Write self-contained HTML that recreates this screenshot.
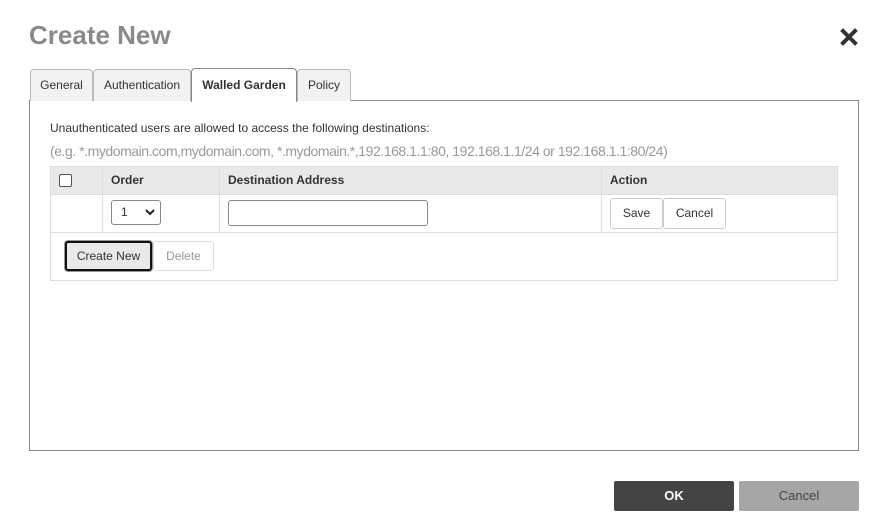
<!DOCTYPE html>
<html><head><style>
body{margin:0;width:890px;height:520px;background:#fff;font-family:"Liberation Sans",Arial,sans-serif;position:relative;overflow:hidden}
.a{position:absolute;box-sizing:border-box}
.tab{position:absolute;top:69px;height:32px;border:1px solid #bbb;border-bottom:none;border-radius:4px 4px 0 0;background:#f2f2f2;font-size:12px;color:#333;text-align:center;line-height:30px;box-sizing:border-box}
.btn{position:absolute;box-sizing:border-box;border:1px solid #ccc;border-radius:3px;background:#fff;font-size:12px;color:#333;text-align:center}
</style></head><body>
<div class="a" style="left:29px;top:20px;font-size:26px;font-weight:bold;color:#8a8a8a">Create New</div>
<svg class="a" style="left:840px;top:28px" width="18" height="18" viewBox="0 0 18 18"><path d="M3 3L15 15M15 3L3 15" stroke="#333" stroke-width="4" stroke-linecap="square"/></svg>
<div class="a" style="left:29px;top:100px;width:830px;height:351px;border:1px solid #888"></div>
<div class="tab" style="left:30px;width:63px">General</div>
<div class="tab" style="left:93px;width:98px">Authentication</div>
<div class="tab" style="left:191px;width:106px;top:68px;height:34px;background:#fff;border-color:#888;font-weight:bold;line-height:32px">Walled Garden</div>
<div class="tab" style="left:297px;width:54px">Policy</div>
<div class="a" style="left:50px;top:121px;font-size:12px;color:#333">Unauthenticated users are allowed to access the following destinations:</div>
<div class="a" style="left:50px;top:143px;font-size:14px;color:#999;letter-spacing:-0.45px;white-space:nowrap">(e.g. *.mydomain.com,mydomain.com, *.mydomain.*,192.168.1.1:80, 192.168.1.1/24 or 192.168.1.1:80/24)</div>
<div class="a" style="left:50px;top:166px;width:788px;height:115px;border:1px solid #ddd"></div>
<div class="a" style="left:51px;top:167px;width:786px;height:28px;background:#e9e9e9;border-bottom:1px solid #ddd"></div>
<div class="a" style="left:51px;top:232px;width:786px;height:1px;background:#ddd"></div>
<div class="a" style="left:102px;top:167px;width:1px;height:65px;background:#ddd"></div>
<div class="a" style="left:219px;top:167px;width:1px;height:65px;background:#ddd"></div>
<div class="a" style="left:601px;top:167px;width:1px;height:65px;background:#ddd"></div>
<div class="a" style="left:59px;top:174px;width:13px;height:13px;border:1px solid #555;border-radius:2px;background:#fff"></div>
<div class="a" style="left:111px;top:173px;font-size:12px;font-weight:bold;color:#333">Order</div>
<div class="a" style="left:228px;top:173px;font-size:12px;font-weight:bold;color:#333">Destination Address</div>
<div class="a" style="left:610px;top:173px;font-size:12px;font-weight:bold;color:#333">Action</div>
<div class="a" style="left:111px;top:200px;width:50px;height:25px;border:1px solid #888;border-radius:3px;font-size:12px;line-height:23px;padding-left:9px;color:#333">1</div>
<svg class="a" style="left:145px;top:209px" width="10" height="7" viewBox="0 0 10 7"><path d="M1 1L5 5L9 1" stroke="#222" stroke-width="2" fill="none"/></svg>
<div class="a" style="left:228px;top:200px;width:200px;height:26px;border:1px solid #888;border-radius:3px"></div>
<div class="btn" style="left:610px;top:198px;width:53px;height:31px;line-height:29px">Save</div>
<div class="btn" style="left:663px;top:198px;width:63px;height:31px;line-height:29px">Cancel</div>
<div class="btn" style="left:65px;top:241px;width:87px;height:30px;line-height:26px;border:2px solid #111;background:#e9e9e9;box-shadow:0 0 0 1px #999">Create New</div>
<div class="btn" style="left:153px;top:241px;width:61px;height:30px;line-height:28px;color:#999;border-color:#ddd">Delete</div>
<div class="a" style="left:614px;top:481px;width:120px;height:30px;background:#444;border-radius:2px;color:#fff;font-weight:bold;font-size:13px;text-align:center;line-height:30px">OK</div>
<div class="a" style="left:739px;top:481px;width:120px;height:30px;background:#a6a6a6;border-radius:2px;color:#444;font-size:13px;text-align:center;line-height:30px">Cancel</div>
</body></html>
